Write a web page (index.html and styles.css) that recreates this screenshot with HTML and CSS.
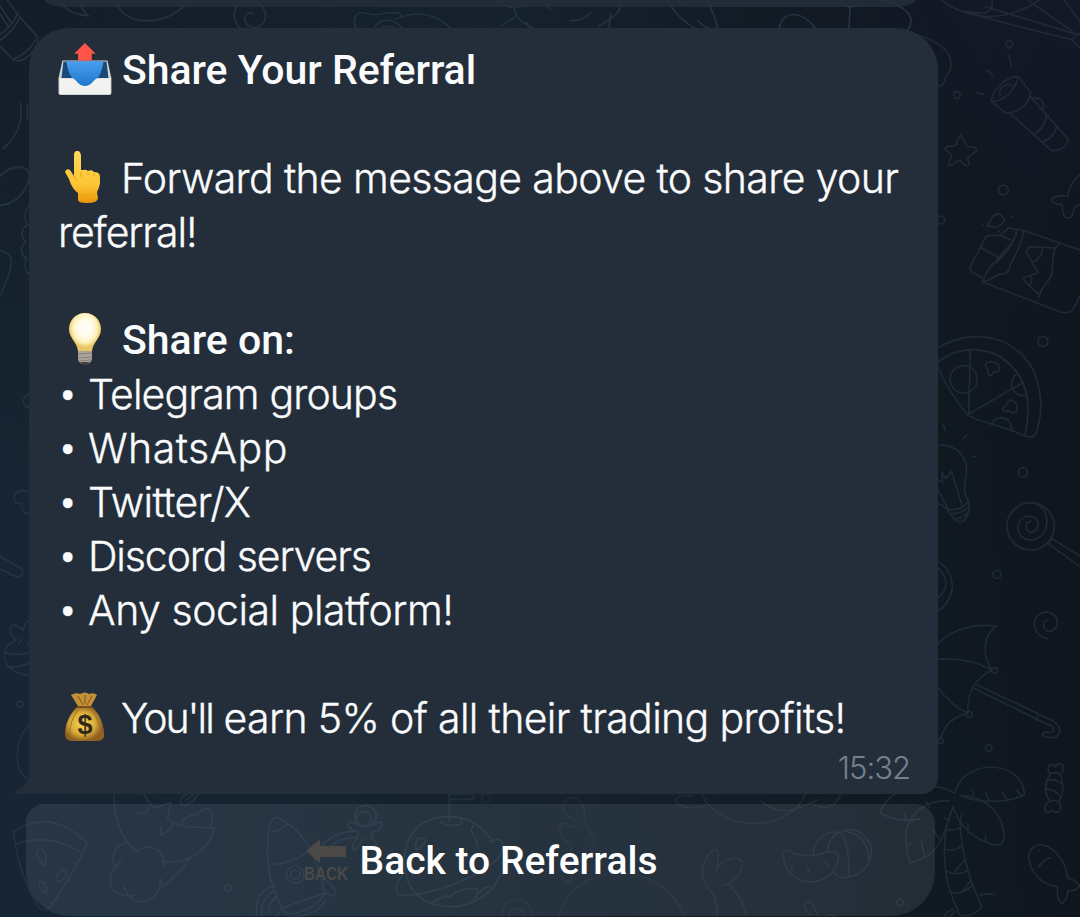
FILE: index.html
```html
<!DOCTYPE html>
<html lang="en">
<head>
<meta charset="utf-8">
<title>Share Your Referral</title>
<link rel="stylesheet" href="styles.css">
</head>
<body>
<main class="chat">
  <svg class="wallpaper" viewBox="0 0 1080 917" aria-hidden="true">
    <!-- upper left -->
    <g transform="scale(.33333)" class="doodle left">
      <path d="M22 0 52 42 114 112Q118 130 92 162Q64 190 40 180L0 138M52 42Q42 72 0 104M60 52Q44 88 0 122M0 42 24 78M0 18 32 66M108 118Q84 160 40 178M186 8Q196 38 266 48Q240 28 246 6M342 0Q372 62 432 62Q520 64 566 0M722 86C690 60 696 4 748 2C800 0 812 66 776 80C744 92 722 58 740 42Q752 34 760 42"/>
    </g>
    <!-- top strip -->
    <g transform="translate(300 0) scale(.4209 .33333)" class="doodle left side">
      <path d="M134 84C122 60 134 36 150 38Q180 50 210 38Q242 34 242 50L228 58M174 84Q190 60 208 60Q228 62 242 84M190 84Q206 74 224 84M242 50C290 30 330 50 358 84M470 0C480 24 520 30 534 10M510 24Q508 60 554 84M510 52 478 78M538 66 546 82M586 8Q588 24 597 31M642 62Q674 66 690 37M758 0C770 30 750 50 710 78M738 40 734 84M872 0Q900 60 938 84M966 0Q984 40 992 84M946 62Q956 80 972 84M900 0 912 12M1138 84C1150 30 1190 30 1224 84M1282 0C1284 24 1320 26 1330 10M1307 22 1304 84M1386 0C1440 20 1466 50 1444 90"/>
    </g>
    <g transform="translate(0 60) scale(.33333 .4848)" class="doodle left side">
      <path d="M60 86Q76 144 10 182M82 92V124M0 240C30 216 84 214 88 238C84 274 40 298 0 300M87 303C70 312 72 334 84 340C62 344 62 368 78 374C58 386 62 406 80 408C70 424 76 438 88 442M0 393Q38 398 34 420Q30 444 0 486M88 688Q70 694 70 706Q74 716 88 716M88 892C62 884 42 890 42 904Q44 918 66 914Q64 938 88 936M0 1024 52 1044Q72 1050 67 1062Q58 1070 36 1062L0 1050M14 1222C22 1202 36 1202 50 1196C32 1190 24 1176 34 1168Q46 1162 70 1176Q72 1160 88 1156M88 1222Q50 1230 14 1222Q8 1262 88 1270M16 1250Q50 1256 88 1244M56 1204 64 1196M84 1208V1200M88 1372C34 1404 46 1476 84 1482"/>
      <ellipse cx="60" cy="1329" rx="10" ry="6"/>
    </g>
    <!-- upper right: balloon, flashlight, star, chocolate -->
    <g transform="translate(900 0) scale(.33333)" class="doodle">
      <path d="M62 108Q156 138 153 198Q150 218 138 230Q132 260 112 260M124 0Q180 44 264 50Q350 48 418 0M276 0Q282 28 254 40L192 34M250 18 540 106M192 34Q340 78 514 118L540 98M384 0 530 104M492 0 540 66M514 118 540 142M416 0 396 16M326 166 335 200M258 211Q270 214 278 227M229 277 252 284"/>
      <path d="M274 304C280 262 322 230 354 229L391 276C390 312 354 340 316 339ZM274 304C310 306 346 274 354 229M300 286C294 262 320 246 338 258M391 290 505 418C500 442 474 456 454 451L328 339M396 294C418 288 438 308 428 330M438 346C440 368 420 394 402 402M470 378C468 398 448 420 430 424"/>
      <path d="M181 406C190 408 190 424 200 438C210 444 232 438 229 450C226 460 210 464 204 472C202 482 214 496 200 498C192 496 186 484 178 480C170 482 158 500 148 496C142 488 156 476 154 466C148 456 132 452 136 442C142 434 158 442 166 436C174 428 172 410 181 406Z"/>
      <path d="M540 524Q506 552 504 588Q476 584 458 594Q450 612 486 614Q488 640 494 652Q520 662 522 622L540 614M276 652Q290 636 302 644L314 660Q304 680 282 682L262 676ZM260 707 208 804Q210 816 248 834M260 707 300 706 340 724M300 706 326 684 372 692M240 742 296 772M340 724 288 782M350 688C350 730 292 790 280 790Q256 816 248 846M370 692C370 740 330 780 328 808Q320 824 298 822Q270 840 248 846L482 936Q512 944 522 924L540 888M372 692 540 750M478 732 466 744 390 740Q376 748 380 758L414 818 374 832Q366 838 380 850L418 884V892M426 748Q428 768 414 772Q416 784 400 784M390 826Q402 840 388 854M466 744C450 780 466 820 446 840Q420 870 418 890"/>
      <circle cx="328" cy="133" r="10"/><circle cx="171" cy="285" r="10"/><circle cx="310" cy="570" r="15"/><circle cx="122" cy="660" r="12"/>
      <path d="M248 673h2M261 690h2M296 694h2M335 650h2"/>
    </g>
    <!-- right: pizza, bulb, lollipop -->
    <g transform="translate(900 320) scale(.33333)" class="doodle">
      <path d="M110 86C190 34 300 36 368 106C422 160 436 260 408 340Q400 358 374 347C308 316 230 306 202 284C166 240 132 190 112 136M112 126C190 70 280 82 330 134C390 190 392 270 374 347M211 91 206 282 366 190M276 314C286 284 330 284 336 326M348 164C328 176 326 224 374 228"/>
      <circle cx="191" cy="178" r="41"/>
      <path d="M256 138C258 118 298 122 298 144C298 156 290 158 280 155C280 168 262 170 264 158C270 148 260 150 256 138Z"/>
      <path d="M324 244C332 234 352 246 351 264C350 282 334 282 328 272C316 278 302 270 310 260Q320 262 324 244ZM130 314 135 331M190 356 200 344M218 412 229 407M112 376C170 370 200 412 200 450C196 500 184 510 206 544Q212 570 200 590L190 604Q178 610 164 598L142 570Q134 558 112 550M112 506 146 570M112 478 128 488 126 458 138 476 154 454 186 556M142 570Q190 570 204 546M150 582Q188 582 208 558M162 596Q190 596 208 572M112 722Q156 750 157 800Q152 852 112 874M112 742Q138 766 138 790Q136 818 112 834"/>
      <circle cx="392" cy="619" r="71"/>
      <path d="M384 548C460 546 456 660 392 660C340 658 342 590 388 588C426 592 420 638 392 637Q374 630 380 612Q384 604 392 604M456 656 540 708M444 670 540 740M456 656 444 672"/>
      <circle cx="429" cy="64" r="15"/><circle cx="369" cy="457" r="14"/><circle cx="291" cy="763" r="12"/>
    </g>
    <!-- lower right: umbrella, candy, palm, fish -->
    <g transform="translate(900 600) scale(.33333)" class="doodle">
      <path d="M112 34Q134 24 144 0M112 132Q180 66 290 78C250 104 244 164 276 210C224 236 200 276 204 340Q150 314 112 260M112 178Q200 170 276 210M204 340Q136 356 122 416M230 254 446 356C490 374 488 412 456 413Q430 414 427 402Q432 392 444 398C464 400 468 378 444 374L220 264M414 346 410 360M444 116C396 110 386 44 436 36C480 36 484 88 448 94C426 92 426 62 444 60"/>
      <circle cx="284" cy="211" r="9"/><circle cx="208" cy="343" r="9"/><circle cx="122" cy="423" r="8"/><circle cx="266" cy="444" r="10"/>
      <path d="M446 514C438 492 460 490 466 500C474 484 494 492 488 506Q492 516 480 522C492 550 492 582 476 606Q488 622 478 634Q466 640 458 630C448 642 430 636 434 622Q438 608 450 604C432 580 434 550 450 522ZM450 522Q464 514 480 522M442 540Q466 536 484 550M438 566Q466 570 480 588M450 604Q466 598 476 606"/>
      <path d="M164 580C190 470 370 480 373 584C310 616 220 604 180 587C240 584 312 630 312 714C310 736 292 736 280 734C214 716 174 670 160 620M164 580Q120 552 60 560Q-40 570-60 640Q0 670 60 656M148 602C60 600 10 660 18 730Q22 770 32 788Q100 770 124 720L146 660M160 620Q128 690 134 776Q136 860 180 946Q220 952 246 920Q226 880 206 820Q182 740 180 660M216 568 222 586M258 580 266 600M308 578 320 598M350 570 364 586M256 708 260 728M204 670V698M186 640 180 668M132 653 150 662M102 692 122 722M64 726 74 768M34 726 20 746M12 636 18 660M76 604 88 622M144 688Q164 694 184 682M138 748Q164 756 186 736M140 814Q170 828 200 814M164 816 194 780M148 874Q180 890 216 858M184 878 214 840M240 886Q256 878 284 884M134 948Q144 930 160 928M150 950 166 934"/>
      <path d="M386 772C388 740 414 728 438 738C480 756 502 804 502 834Q530 840 538 858Q530 874 504 872Q500 904 486 910Q470 902 472 860C420 856 390 810 386 772ZM416 800Q434 778 450 773M415 755h2"/>
    </g>
    <!-- lower left: watermelon, parrot, rocket, planet -->
    <g transform="translate(0 780) scale(.33333)" class="doodle left">
      <path d="M40 156Q150 80 262 190Q228 266 150 382Q134 396 118 384Q60 300 40 156ZM50 192Q150 156 246 220M110 212Q128 194 138 226L136 260Q110 240 110 212M168 304Q166 276 188 270Q208 274 194 292Q182 306 168 304M118 308Q138 296 140 338Q112 330 118 308"/>
      <path d="M342 38C342 120 360 174 412 216M430 42 460 84 512 68 502 116Q530 142 590 142L642 144C630 206 570 254 492 244M412 216C436 184 500 206 490 258M382 188C338 196 330 240 348 262M366 242C326 268 320 320 346 336Q380 352 406 346M372 320C390 390 482 376 482 296M484 320Q510 310 520 290L550 262 568 234M412 98Q440 110 444 82M482 138Q486 156 482 166Q508 154 520 132M546 134Q548 106 594 104Q604 82 630 88Q644 110 630 138M562 42Q538 50 542 70Q560 88 596 42M560 58 580 44"/>
      <path d="M806 156C808 120 822 108 836 113C914 154 950 224 974 340L846 384C806 310 796 230 806 156ZM806 156Q846 156 862 130M818 254Q900 244 926 210M770 411C764 350 790 322 824 318M786 411C780 370 800 338 830 332M808 400Q804 366 832 348M828 411 846 384 860 402Q940 398 974 340M862 411Q950 410 974 364M974 300Q1010 320 1004 348L970 338M966 196Q1010 152 1070 154M984 206Q1020 170 1070 172"/>
      <circle cx="886" cy="284" r="26"/><circle cx="886" cy="284" r="14"/><circle cx="684" cy="324" r="10"/><circle cx="1097" cy="108" r="32"/><circle cx="1092" cy="116" r="22"/>
      <path d="M1074 136Q1044 114 1044 134Q1050 150 1072 154L1074 170M1120 136Q1148 114 1146 136Q1138 154 1118 154L1114 176M1076 168C1050 200 1054 212 1070 208L1090 176M1112 170C1130 190 1140 200 1114 198M1348 120V42H1420V58H1348M1348 110C1240 110 1208 190 1214 260C1220 340 1280 380 1350 380C1420 380 1480 340 1500 286M1348 110Q1430 110 1482 190M1322 126Q1340 142 1384 132V116M1212 280C1180 320 1180 350 1220 346C1300 340 1420 300 1490 240Q1520 202 1500 180Q1482 176 1466 186M1300 366Q1330 346 1350 350Q1380 320 1430 326Q1442 340 1420 358M1250 210Q1240 178 1262 174Q1284 174 1270 196ZM1420 138Q1406 150 1426 172L1432 200M1438 340Q1450 318 1472 320"/>
    </g>
    <g transform="translate(460 740) scale(.33333)" class="doodle">
      <path d="M0 178 42 174V164M400 340C376 330 412 306 404 290Q376 268 374 240C376 200 364 170 332 174C292 184 308 220 330 232Q356 244 348 260Q330 264 322 252C294 240 292 280 312 298Q344 316 330 370L306 408Q306 428 328 424L340 404M296 531C340 360 600 350 676 531M126 531C126 460 216 460 218 531M146 531Q150 506 170 506Q190 506 192 531M724 162C780 280 990 280 1036 162M644 180Q664 162 700 168M644 180Q660 214 736 198M904 184Q960 230 1020 202L1070 182M1060 194Q1120 220 1142 162M770 531C780 450 726 450 726 396C730 360 750 330 768 328Q782 340 768 392M768 392C790 350 840 346 846 366Q848 420 786 436M804 430Q860 490 858 531M970 350C970 326 990 328 1000 340Q1050 356 1100 336Q1134 330 1136 354C1120 450 980 450 970 350M1060 344C1060 290 1110 270 1140 278C1180 250 1240 290 1234 344C1220 400 1180 410 1160 412C1130 418 1120 400 1120 386M1100 336Q1110 284 1140 278Q1170 310 1166 410M1150 274Q1230 280 1226 370M1000 378 994 390M1042 378 1048 398M1092 364 1104 376M1076 531 1060 496Q1048 478 1034 490Q1030 504 1050 524M1096 531Q1106 516 1128 531"/>
      <circle cx="78" cy="174" r="13"/><circle cx="1320" cy="487" r="10"/>
    </g>
  </svg>

  <div class="previous"></div>

  <article class="bubble">
    <svg class="tail" viewBox="0 0 16 20" aria-hidden="true"><path d="M16 0Q13 14 1 17Q-1 20 2 20H16Z"/></svg>
    <p class="line heading">
      <svg class="emoji" viewBox="0 0 54 54"><defs><linearGradient id="tray" x2="0" y2="1"><stop stop-color="#4a9df0"/><stop offset="1" stop-color="#1d78c8"/></linearGradient></defs><g transform="translate(.5 -1) scale(.98)"><path fill="#cfd3d5" d="M4 19H50L54 37V52Q54 54 52 54H2Q0 54 0 52V37Z"/><path fill="#194a78" d="M5 20H49L51 37H3Z"/><path fill="url(#tray)" d="M8 20H46Q43 36 38 39Q34 45 27 45Q20 45 16 39Q10 34 8 20Z"/><path fill="#f2f2f1" d="M1 37H13C19 37 19 45 27 45S35 37 41 37H53V52Q53 53 52 53H2Q1 53 1 52Z"/><path fill="#ff5549" d="M27 1 38 12H34V19H20V12H16Z"/></g></svg>
      <span class="t1">Share Your Referral</span>
    </p>
    <p class="line"></p>
    <p class="line">
      <svg class="emoji" viewBox="0 0 54 54"><defs><linearGradient id="hand" x2="0" y2="1"><stop stop-color="#ffd75a"/><stop offset=".65" stop-color="#fcc534"/><stop offset="1" stop-color="#eb9609"/></linearGradient></defs><g transform="translate(0 -1)"><path fill="url(#hand)" d="M16 4Q17 0 20 1Q22 1 23 5V20L25 20Q28 19 30 21Q34 19 36 22Q42 22 42 27V33Q41 39 39 42L40 48Q40 53 29 53Q20 53 20 50V43Q14 39 11 29L7 22Q8 18 12 20L16 26Z"/><path fill="none" stroke="#e8a41c" stroke-width="1" d="M23 22V27M30 22V25M36 23V26M16 26 19 31M21 45Q31 47 39 43"/></g></svg>
      <span class="t2">Forward the message above to share your</span>
    </p>
    <p class="line"><span class="t3">referral!</span></p>
    <p class="line"></p>
    <p class="line heading">
      <svg class="emoji" viewBox="0 0 54 54"><defs><radialGradient id="glow" cy=".4"><stop offset=".35" stop-color="#fffef5"/><stop offset=".75" stop-color="#fff1bd"/><stop offset="1" stop-color="#e9c665"/></radialGradient></defs><g transform="translate(0 -1)"><path fill="#aaa49a" d="M20 38H34V47Q33 51 30 52H24Q21 51 20 47Z"/><path stroke="#85817a" stroke-width="1" d="M20 42 34 41M20 46 34 45M22 49 33 48"/><path fill="#45403b" d="M22 50H32L29 53H25Z"/><path fill="url(#glow)" d="M27 1C37 1 43 9 43 17C43 26 35 30 34 39H20C19 30 11 26 11 17C11 9 17 1 27 1Z"/></g></svg>
      <span class="t4">Share on:</span>
    </p>
    <p class="line"><span class="dot">•</span><span class="t5">Telegram groups</span></p>
    <p class="line"><span class="dot">•</span><span class="t6">WhatsApp</span></p>
    <p class="line"><span class="dot">•</span><span class="t7">Twitter/X</span></p>
    <p class="line"><span class="dot">•</span><span class="t8">Discord servers</span></p>
    <p class="line"><span class="dot">•</span><span class="t9">Any social platform!</span></p>
    <p class="line"></p>
    <p class="line">
      <svg class="emoji" viewBox="0 0 54 54"><defs><radialGradient id="bag" cx=".45"><stop stop-color="#f7d75b"/><stop offset=".65" stop-color="#d8aa37"/><stop offset="1" stop-color="#916021"/></radialGradient></defs><g><path fill="#c49135" d="M13 4Q18 1 22 3Q27 0 31 3Q36 1 39 4L33 15H20Z"/><path fill="none" stroke="#80561f" stroke-width="1" d="M20 5 25 14M27 4V13M34 5 29 14"/><path fill="url(#bag)" d="M20 15H33C41 22 46 32 46 43Q47 50 39 50H14Q7 50 7 43C7 33 12 22 20 15Z"/><path fill="none" stroke="#76501f" stroke-width="2" d="M19 16H34"/><path fill="none" stroke="#a2762a" stroke-width="1" d="M20 19Q12 29 12 42M34 19Q42 30 42 42"/><text x="27" y="43" class="dollar">$</text></g></svg>
      <span class="t10"><span class="contraction">You'll</span> earn 5% of all their trading profits!</span>
    </p>
    <time class="time">15:32</time>
  </article>

  <button class="back">
    <svg class="back-icon" viewBox="0 0 44 44"><path d="M1 12 15 0V7H41V18H15V24Z"/><text x="-1" y="41" textLength="44" lengthAdjust="spacingAndGlyphs">BACK</text></svg>
    <span class="label">Back to Referrals</span>
  </button>
</main>
</body>
</html>
```
FILE: styles.css
```css
* { box-sizing: border-box; }
body { margin: 0; background: #101820; }
.chat {
  position: relative;
  width: 1080px;
  height: 917px;
  overflow: hidden;
  display: flex;
  flex-direction: column;
  align-items: flex-start;
  background:
    radial-gradient(circle at 100% 0, rgba(20, 25, 40, .8) 0, rgba(18, 26, 37, 0) 420px),
    radial-gradient(circle at 0 0, rgba(18, 26, 35, .8) 0, rgba(18, 26, 35, 0) 500px),
    linear-gradient(86deg, #172634 0%, #15212d 48%, #101820 86%, #0e151c 100%);
}
.wallpaper { position: absolute; left: 0; top: 0; width: 1080px; height: 917px; }
.doodle { fill: none; stroke: #1f2a35; stroke-width: 5; stroke-linecap: round; stroke-linejoin: round; }
.doodle.left { stroke: #223240; }
.doodle.side { stroke-width: 4.4; }
.previous {
  position: relative;
  width: 870px;
  height: 7px;
  margin-left: 45px;
  background: rgba(37, 48, 60, .8);
  border-radius: 0 0 22px 22px / 0 0 7px 7px;
}
.bubble {
  position: relative;
  width: 909px;
  height: 766px;
  margin: 21px 0 0 29px;
  padding: 15px 28px 0 29px;
  background: #232e3a;
  border-radius: 40px 42px 16px 0;
  color: #fafbfd;
}
.tail { position: absolute; left: -15px; bottom: 0; width: 16px; height: 20px; fill: #232e3a; }
.line {
  display: flex;
  height: 54px;
  margin: 0;
  font: 300 41px/54px Inter, "Liberation Sans", sans-serif;
  -webkit-text-stroke: .35px #fafbfd;
  white-space: pre;
}
.heading { font: 500 41px/54px Roboto, "Liberation Sans", sans-serif; -webkit-text-stroke: 0; }
.emoji { width: 54px; height: 54px; margin-right: 10px; flex: none; }
.dollar { font: 700 27px "Liberation Sans", sans-serif; text-anchor: middle; fill: #33291b; -webkit-text-stroke: 0; }
.dot { width: 30px; padding-left: 2px; flex: none; font: 400 46px/58px Roboto, sans-serif; }
.t1 { letter-spacing: -.05px; }
.t2 { letter-spacing: -.64px; margin-left: -1px; }
.t3 { letter-spacing: -1.1px; }
.t5 { letter-spacing: -.87px; }
.t6 { letter-spacing: .45px; }
.t7 { letter-spacing: -.65px; }
.t8 { letter-spacing: -1.12px; }
.t9 { letter-spacing: -.48px; }
.t10 { letter-spacing: -.66px; margin-left: -1px; }
.contraction { letter-spacing: -2px; }
.time {
  display: block;
  margin-top: 3px;
  text-align: right;
  font: 300 31px/40px Inter, sans-serif;
  letter-spacing: -1px;
  color: #73808f;
}
.back {
  position: relative;
  display: flex;
  align-items: center;
  justify-content: center;
  gap: 11px;
  width: 909px;
  height: 112px;
  margin: 10px 0 0 26px;
  padding: 2px 0 0 1px;
  border: 0;
  border-radius: 18px 20px 44px 44px;
  background: rgba(90, 106, 120, .25);
  color: #fff;
  font: 500 39px/50px Roboto, sans-serif;
}
.back-icon { width: 44px; height: 44px; fill: #4b4947; overflow: visible; }
.back-icon text { font: 700 19px "Liberation Sans", sans-serif; }
```
